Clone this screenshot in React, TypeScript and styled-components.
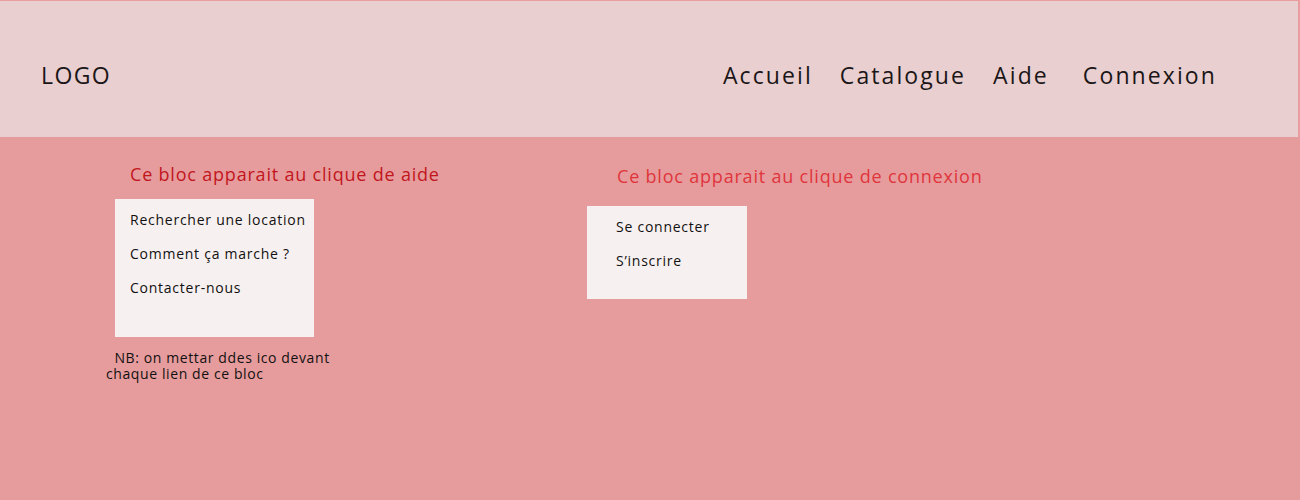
import React from "react";
import styled, { createGlobalStyle } from "styled-components";

const Global = createGlobalStyle`
  html, body { margin: 0; padding: 0; }
  body { font-family: "Open Sans", "DejaVu Sans", sans-serif; color: #1b1617; }
`;

const Page = styled.div`
  width: 1300px;
  height: 500px;
  display: flex;
  flex-direction: column;
  background: #e69c9d;
`;

const Header = styled.header`
  box-sizing: border-box;
  height: 137px;
  background: #e9cfd0;
  border-top: 1px solid #e99d9f;
  border-right: 2px solid #e99d9f;
  padding: 12px 81px 0 41px;
  display: flex;
  align-items: center;
  justify-content: space-between;
`;

const Logo = styled.div`
  font-size: 23px;
  font-weight: 500;
  letter-spacing: 1.4px;
  line-height: 30px;
`;

const Nav = styled.nav`
  display: flex;
  align-items: center;
  gap: 27px;
`;

const NavLink = styled.a<{ $extra?: number }>`
  font-size: 23px;
  font-weight: 500;
  letter-spacing: 2.1px;
  line-height: 30px;
  color: #1b1617;
  text-decoration: none;
  margin-left: ${(p) => p.$extra ?? 0}px;
`;

const Main = styled.main`
  flex: 1;
  display: flex;
  align-items: flex-start;
  padding-left: 106px;
`;

const Column = styled.section<{ $width: number; $top: number }>`
  width: ${(p) => p.$width}px;
  padding-top: ${(p) => p.$top}px;
  display: flex;
  flex-direction: column;
  align-items: flex-start;
`;

const Title = styled.h2<{ $color: string; $indent: number; $gap: number }>`
  margin: 0 0 ${(p) => p.$gap}px ${(p) => p.$indent}px;
  font-size: 18px;
  font-weight: 400;
  letter-spacing: 0.8px;
  line-height: 24px;
  color: ${(p) => p.$color};
  white-space: nowrap;
`;

const Menu = styled.ul<{ $w: number; $h: number; $pad: number; $indent: number }>`
  list-style: none;
  box-sizing: border-box;
  margin: 0 0 0 ${(p) => p.$indent}px;
  width: ${(p) => p.$w}px;
  height: ${(p) => p.$h}px;
  padding: 4px 0 0 ${(p) => p.$pad}px;
  background: #f7f0f0;
`;

const Item = styled.li`
  font-size: 14px;
  font-weight: 500;
  line-height: 34px;
  height: 34px;
  letter-spacing: 0.75px;
  white-space: nowrap;
  color: #121010;
`;

const Note = styled.p`
  margin: 13px 0 0;
  font-size: 14px;
  font-weight: 500;
  line-height: 16px;
  letter-spacing: 0.6px;
  white-space: pre;
  color: #121010;
`;

export default function App() {
  return (
    <>
      <Global />
      <Page>
        <Header>
          <Logo>LOGO</Logo>
          <Nav>
            <NavLink>Accueil</NavLink>
            <NavLink>Catalogue</NavLink>
            <NavLink>Aide</NavLink>
            <NavLink $extra={7}>Connexion</NavLink>
          </Nav>
        </Header>
        <Main>
          <Column $width={481} $top={25}>
            <Title $color="#c2161d" $indent={24} $gap={13}>
              Ce bloc apparait au clique de aide
            </Title>
            <Menu $w={199} $h={138} $pad={15} $indent={9}>
              <Item>Rechercher une location</Item>
              <Item>Comment ça marche ?</Item>
              <Item>Contacter-nous</Item>
            </Menu>
            <Note>{"  NB: on mettar ddes ico devant\nchaque lien de ce bloc"}</Note>
          </Column>
          <Column $width={420} $top={27}>
            <Title $color="#e0353c" $indent={30} $gap={18}>
              Ce bloc apparait au clique de connexion
            </Title>
            <Menu $w={160} $h={93} $pad={29} $indent={0}>
              <Item>Se connecter</Item>
              <Item>S’inscrire</Item>
            </Menu>
          </Column>
        </Main>
      </Page>
    </>
  );
}
